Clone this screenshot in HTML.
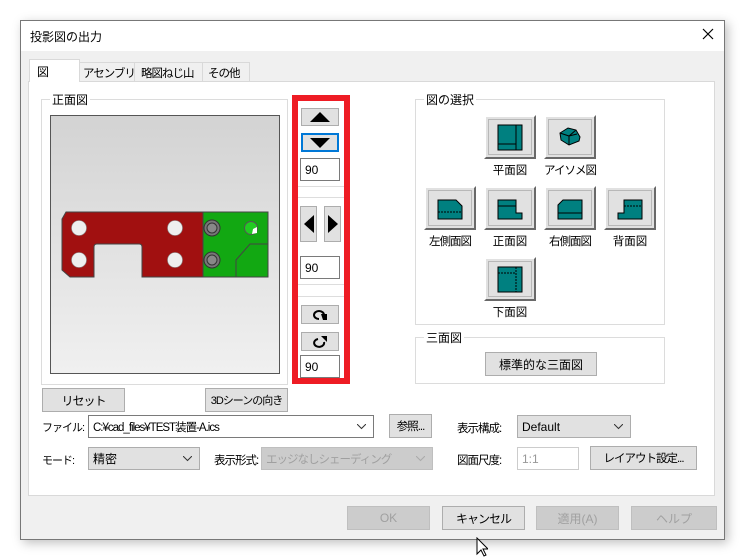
<!DOCTYPE html>
<html><head><meta charset="utf-8"><style>
*{box-sizing:border-box;margin:0;padding:0;white-space:nowrap}
body{width:745px;height:560px;background:#fff;position:relative;overflow:hidden;font-family:"Liberation Sans","Noto Sans CJK JP",sans-serif;font-size:12px;color:#000}
.a{position:absolute}
.dlg{left:20px;top:20px;width:705px;height:520px;border:1px solid #777;background:#f0f0f0;box-shadow:3px 3px 10px rgba(0,0,0,.25)}
.btn{position:absolute;background:#e1e1e1;border:1px solid #adadad;text-align:center;font-size:12px;display:flex;align-items:center;justify-content:center;overflow:hidden}
.dis{color:#a0a0a0;background:#ccc;border-color:#bfbfbf}
.inp{position:absolute;background:#fff;border:1px solid #7a7a7a;padding-left:4px;display:flex;align-items:center;overflow:hidden}
.grp{position:absolute;border:1px solid #dcdcdc}
.grp>span{position:absolute;top:-9px;left:8px;background:#fff;padding:0 2px}
.vb{position:absolute;width:52px;height:44px;background:#e1e1e1;border:2px solid;border-color:#fff #696969 #696969 #fff;box-shadow:inset 0 0 0 2px #e1e1e1,inset 0 0 0 3px #b8b8b8}
.vb svg{position:absolute;left:11px;top:7px}
.lbl{position:absolute;width:70px;text-align:center;font-size:11.5px}
.chev{position:absolute;right:7px;top:8px}
.n{letter-spacing:-1px}
</style></head><body>
<div class="a dlg"></div>
<div class="a" style="left:21px;top:21px;width:703px;height:30px;background:#fff"></div>
<div class="a" style="left:30px;top:28px;font-size:12px">投影図の出力</div>
<svg class="a" style="left:702px;top:28px" width="12" height="12"><path d="M1 1L11 11M11 1L1 11" stroke="#000" stroke-width="1.2"/></svg>
<div class="a" style="left:28px;top:81px;width:687px;height:415px;background:#fff;border:1px solid #d9d9d9"></div>
<div class="a n" style="left:79px;top:62px;width:56px;height:20px;background:#f0f0f0;border:1px solid #d9d9d9;padding:2px 3px;font-size:11.5px">アセンブリ</div>
<div class="a n" style="left:134px;top:62px;width:69px;height:20px;background:#f0f0f0;border:1px solid #d9d9d9;padding:2px 6px;font-size:11.5px">略図ねじ山</div>
<div class="a n" style="left:202px;top:62px;width:48px;height:20px;background:#f0f0f0;border:1px solid #d9d9d9;padding:2px 5px;font-size:11.5px">その他</div>
<div class="a" style="left:29px;top:59px;width:51px;height:23px;background:#fff;border:1px solid #d9d9d9;border-bottom:none;padding:3px 7px">図</div>
<div class="grp" style="left:41px;top:99px;width:247px;height:286px"><span>正面図</span></div>
<div class="a" style="left:50px;top:115px;width:230px;height:259px;border:1px solid #555;background:linear-gradient(#d3d3d3,#f0f0f0)"></div>
<svg class="a" style="left:0;top:0" width="300" height="300">
<path d="M66 212H203V277H142V247Q142 244 139 244H97Q94 244 94 247V277H70L62 270V219Z" fill="#a11010" stroke="#444" stroke-width="1"/>
<rect x="203" y="212" width="65" height="65" fill="#12a812" stroke="#444"/>
<path d="M236 277V260L250 244H268" fill="none" stroke="#444"/>
<g fill="#eee" stroke="#888" stroke-width=".6"><circle cx="79" cy="228" r="7.5"/><circle cx="79" cy="260" r="7.5"/><circle cx="175" cy="228" r="7.5"/><circle cx="175" cy="260" r="7.5"/></g>
<g fill="#777" stroke="#333"><circle cx="212" cy="228" r="8"/><circle cx="212" cy="260" r="8"/><circle cx="212" cy="228" r="5" fill="#888"/><circle cx="212" cy="260" r="5" fill="#888"/></g>
<circle cx="251" cy="228" r="6.5" fill="#2c2" stroke="#555"/><path d="M253 229L257 227L257 233L252 234Z" fill="#fff"/>
</svg>
<div class="a" style="left:292px;top:95px;width:58px;height:289px;border:6px solid #ee1c24;background:#fff"></div>
<div class="a" style="left:298px;top:186px;width:46px;height:1px;background:#ddd"></div>
<div class="a" style="left:298px;top:197px;width:46px;height:1px;background:#ddd"></div>
<div class="a" style="left:298px;top:284px;width:46px;height:1px;background:#ddd"></div>
<div class="a" style="left:298px;top:296px;width:46px;height:1px;background:#ddd"></div>
<div class="btn" style="left:301px;top:108px;width:38px;height:18px"><svg width="20" height="10"><path d="M0 10L10 0L20 10Z"/></svg></div>
<div class="btn" style="left:301px;top:133px;width:38px;height:19px;border:2px solid #0078d7"><svg width="20" height="10"><path d="M0 0L10 10L20 0Z"/></svg></div>
<div class="inp" style="left:300px;top:158px;width:40px;height:23px">90</div>
<div class="btn" style="left:300px;top:206px;width:17px;height:36px"><svg width="10" height="18"><path d="M10 0L0 9L10 18Z"/></svg></div>
<div class="btn" style="left:324px;top:206px;width:17px;height:36px"><svg width="10" height="18"><path d="M0 0L10 9L0 18Z"/></svg></div>
<div class="inp" style="left:300px;top:256px;width:40px;height:23px">90</div>
<div class="btn" style="left:301px;top:305px;width:38px;height:19px"><svg width="16" height="12"><path d="M7 10A5 4 0 1 1 12 6" fill="none" stroke="#000" stroke-width="2"/><path d="M9 5H15V11H11Z"/></svg></div>
<div class="btn" style="left:301px;top:332px;width:38px;height:19px"><svg width="16" height="12"><path d="M6 3A5 4 0 1 0 12 6" fill="none" stroke="#000" stroke-width="2"/><path d="M9 0H15V6Z"/></svg></div>
<div class="inp" style="left:300px;top:355px;width:40px;height:23px">90</div>
<div class="grp" style="left:415px;top:99px;width:250px;height:226px"><span>図の選択</span></div>
<div class="vb" style="left:484px;top:115px"><svg width="27" height="27"><rect x="1" y="1" width="24" height="25" fill="#008080" stroke="#000"/><path d="M19 1V26M1 20H19" stroke="#000" fill="none"/></svg></div>
<div class="vb" style="left:544px;top:115px"><svg width="27" height="27"><path d="M3 9L11 4L19 6L23 13L22 17L12 21L4 16Z" fill="#008080" stroke="#000"/><path d="M3 9L12 12L19 6M12 12V21M12 12L20 10" stroke="#000" fill="none"/></svg></div>
<div class="vb" style="left:424px;top:186px"><svg width="27" height="27"><path d="M1 5H19L25 11V24H1Z" fill="#008080" stroke="#000"/><path d="M1 17H25" stroke="#000" stroke-dasharray="2 1"/></svg></div>
<div class="vb" style="left:484px;top:186px"><svg width="27" height="27"><path d="M1 5H19V18H25V24H1Z" fill="#008080" stroke="#000"/><path d="M1 11H19" stroke="#000"/></svg></div>
<div class="vb" style="left:544px;top:186px"><svg width="27" height="27"><path d="M6 5H25V24H1V10Z" fill="#008080" stroke="#000"/><path d="M1 18H25" stroke="#000"/></svg></div>
<div class="vb" style="left:604px;top:186px"><svg width="27" height="27"><path d="M7 5H25V24H1V18H7Z" fill="#008080" stroke="#000"/><path d="M7 11H25" stroke="#000" stroke-dasharray="2 1"/></svg></div>
<div class="vb" style="left:484px;top:257px"><svg width="27" height="27"><rect x="1" y="1" width="24" height="25" fill="#008080" stroke="#000"/><path d="M19 1V26M1 7H19" stroke="#000" stroke-dasharray="2 1" fill="none"/></svg></div>
<div class="lbl" style="left:475px;top:162px">平面図</div>
<div class="lbl n" style="left:535px;top:162px">アイソメ図</div>
<div class="lbl n" style="left:415px;top:233px">左側面図</div>
<div class="lbl" style="left:475px;top:233px">正面図</div>
<div class="lbl n" style="left:535px;top:233px">右側面図</div>
<div class="lbl" style="left:595px;top:233px">背面図</div>
<div class="lbl" style="left:475px;top:304px">下面図</div>
<div class="grp" style="left:415px;top:337px;width:250px;height:47px"><span>三面図</span></div>
<div class="btn" style="left:485px;top:352px;width:112px;height:24px">標準的な三面図</div>
<div class="btn n" style="left:42px;top:388px;width:83px;height:24px">リセット</div>
<div class="btn n" style="left:205px;top:388px;width:83px;height:24px;font-size:11px">3Dシーンの向き</div>
<div class="a n" style="left:42px;top:419px;font-size:11px">ファイル:</div>
<div class="inp n" style="left:88px;top:415px;width:286px;height:23px;font-size:11.5px">C:¥cad_files¥TEST装置-A.ics<svg class="chev" width="9" height="6"><path d="M0 0L4.5 4.5L9 0" fill="none" stroke="#333"/></svg></div>
<div class="btn n" style="left:389px;top:414px;width:43px;height:24px;font-size:11.5px">参照...</div>
<div class="a n" style="left:457px;top:420px;font-size:11.5px">表示構成:</div>
<div class="btn" style="left:517px;top:415px;width:114px;height:23px;justify-content:flex-start;padding-left:4px">Default<svg class="chev" width="9" height="6"><path d="M0 0L4.5 4.5L9 0" fill="none" stroke="#333"/></svg></div>
<div class="a n" style="left:42px;top:452px;font-size:11px">モード:</div>
<div class="btn" style="left:88px;top:447px;width:112px;height:23px;justify-content:flex-start;padding-left:4px">精密<svg class="chev" width="9" height="6"><path d="M0 0L4.5 4.5L9 0" fill="none" stroke="#333"/></svg></div>
<div class="a n" style="left:214px;top:452px;font-size:11.5px">表示形式:</div>
<div class="btn dis n" style="left:261px;top:447px;width:172px;height:23px;justify-content:flex-start;padding-left:4px;font-size:11.5px">エッジなしシェーディング<svg class="chev" width="9" height="6"><path d="M0 0L4.5 4.5L9 0" fill="none" stroke="#aaa"/></svg></div>
<div class="a n" style="left:457px;top:452px;font-size:11.5px">図面尺度:</div>
<div class="inp" style="left:517px;top:447px;width:62px;height:23px;border-color:#ccc;color:#999">1:1</div>
<div class="btn n" style="left:590px;top:446px;width:107px;height:24px;font-size:11.5px">レイアウト設定...</div>
<div class="btn dis" style="left:347px;top:506px;width:83px;height:24px">OK</div>
<div class="btn n" style="left:442px;top:506px;width:83px;height:24px">キャンセル</div>
<div class="btn dis" style="left:536px;top:506px;width:83px;height:24px">適用(A)</div>
<div class="btn dis" style="left:631px;top:506px;width:86px;height:24px">ヘルプ</div>
<svg class="a" style="left:476px;top:537px" width="12" height="20"><path d="M1 1V17L5 13L8 19L10 18L7 12H12Z" fill="#fff" stroke="#000"/></svg>
</body></html>
